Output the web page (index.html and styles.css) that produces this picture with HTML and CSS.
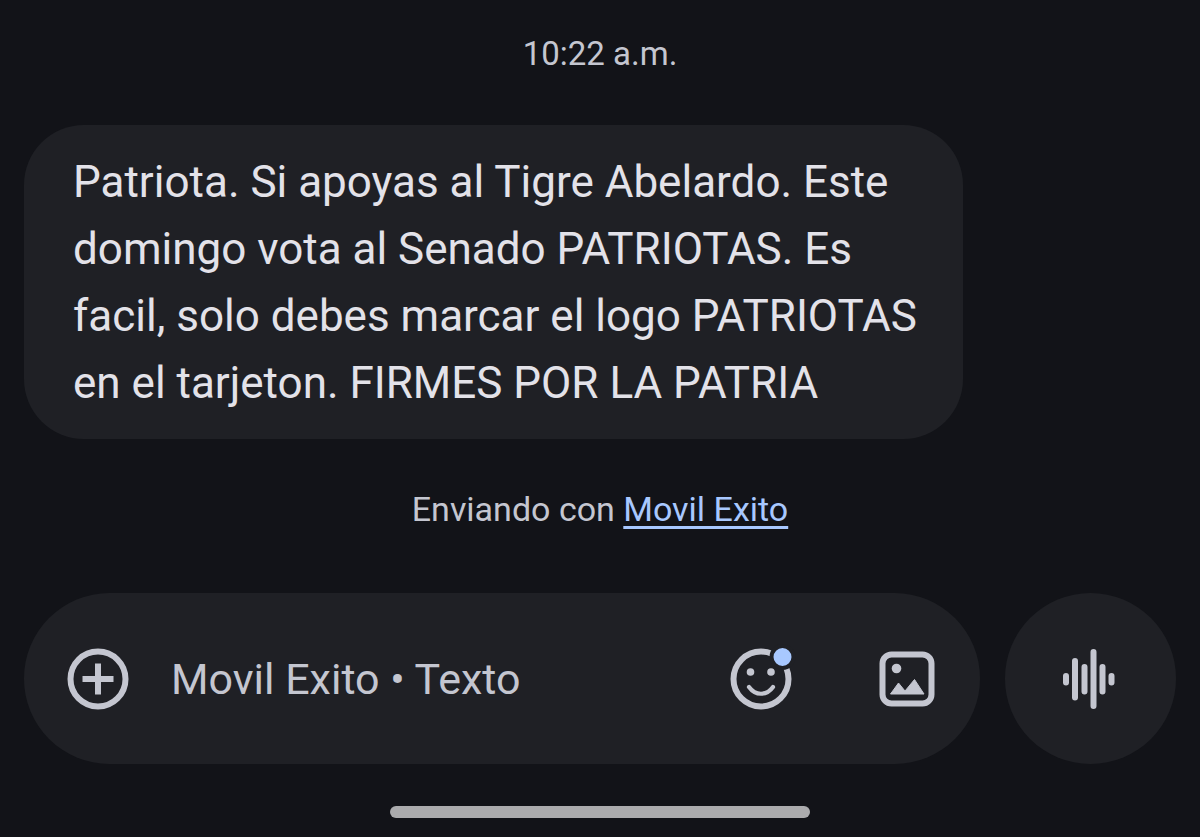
FILE: index.html
```
<!DOCTYPE html>
<html lang="es">
<head>
    <meta charset="UTF-8">
    <meta name="viewport" content="width=device-width, initial-scale=1.0">
    <title>Mensajes</title>
    <link rel="stylesheet" href="styles.css">
</head>
<body>
<main class="chat">
    <time class="time" datetime="10:22">10:22 a.m.</time>

    <p class="bubble">Patriota. Si apoyas al Tigre Abelardo. Este domingo vota al Senado PATRIOTAS. Es facil, solo debes marcar el logo PATRIOTAS en el tarjeton. FIRMES POR LA PATRIA</p>

    <p class="sim">Enviando con <a href="#">Movil Exito</a></p>

    <form class="composer">
        <div class="field">
            <button type="button" class="icon-btn" aria-label="Adjuntar">
                <svg width="62" height="62" viewBox="0 0 62 62">
                    <circle cx="31" cy="31" r="27.5" fill="none" stroke="currentColor" stroke-width="6"/>
                    <path d="M31 15.5v31M15.5 31h31" stroke="currentColor" stroke-width="6"/>
                </svg>
            </button>
            <input type="text" name="message" placeholder="Movil Exito • Texto" aria-label="Mensaje">
            <button type="button" class="icon-btn emoji" aria-label="Emojis">
                <svg width="62" height="62" viewBox="0 0 62 62">
                    <circle cx="31" cy="31" r="27.5" fill="none" stroke="currentColor" stroke-width="6"/>
                    <circle cx="20.5" cy="24" r="3.8"/>
                    <circle cx="41" cy="24" r="3.8"/>
                    <path d="M19 39c6.5 9 17.500 9 24 0" fill="none" stroke="currentColor" stroke-width="4.200" stroke-linecap="round"/>
                    <circle class="dot" cx="52.5" cy="9" r="11"/>
                </svg>
            </button>
            <button type="button" class="icon-btn" aria-label="Galería">
                <svg width="56" height="56" viewBox="0 0 56 56">
                    <rect x="3.5" y="3.5" width="49" height="49" rx="9" fill="none" stroke="currentColor" stroke-width="6"/>
                    <circle cx="17.5" cy="17.5" r="4.8"/>
                    <path d="M11.500 43l8-11 6.500 8 9.500-11.500 9.500 14.500z" stroke="currentColor" stroke-linejoin="round"/>
                </svg>
            </button>
        </div>
        <button type="button" class="voice" aria-label="Nota de voz">
            <svg width="62" height="62" viewBox="0 0 62 62">
                <g fill="none" stroke="currentColor" stroke-width="6" stroke-linecap="round">
                    <path d="M6 28v6.5M15 13v36.5M24.5 19v24.5M33.5 4v54M42.5 19v24.5M51.5 28v6.5"/>
                </g>
            </svg>
        </button>
    </form>

    <div class="nav-handle"></div>
</main>
</body>
</html>
```

FILE: styles.css
```
* {
    margin: 0;
    padding: 0;
    box-sizing: border-box;
}

body {
    background: #121318;
    color: #c4c6d0;
    font-family: Roboto, sans-serif;
}

.chat {
    display: flex;
    flex-direction: column;
    align-items: center;
    min-height: 100vh;
    padding: 32px 24px 19px;
}

.time,
.sim {
    font-size: 34px;
    line-height: 44px;
}

.time {
    font-size: 33px;
}

.bubble {
    align-self: flex-start;
    width: 82%;
    max-width: 939px;
    margin: 49px 0 48px;
    padding: 24px 46px 22px 49px;
    border-radius: 60px;
    background: #1f2025;
    color: #e3e2e9;
    font-size: 44px;
    line-height: 67px;
}

.sim a {
    color: #a8c8ff;
    text-decoration-thickness: 3px;
    text-underline-offset: 5px;
}

.composer {
    display: flex;
    gap: 25px;
    width: 100%;
    margin-top: 62px;
}

.field {
    display: flex;
    flex: 1;
    align-items: center;
    min-width: 0;
    height: 171px;
    padding: 0 45px 0 43px;
    border-radius: 86px;
    background: #1f2025;
}

.field input {
    flex: 1;
    min-width: 0;
    margin: 0 40px 0 42px;
    border: none;
    outline: none;
    background: none;
    color: #e3e2e9;
    font: 43px/60px Roboto, sans-serif;
}

.field input::placeholder {
    color: #c4c6d0;
    opacity: 1;
}

button {
    border: none;
    background: none;
    color: #c4c6d0;
    cursor: pointer;
}

button svg {
    display: block;
    overflow: visible;
    fill: currentColor;
}

.emoji {
    margin-right: 87px;
}

.dot {
    fill: #a8c8ff;
    stroke: #1f2025;
    stroke-width: 4px;
}

.voice {
    display: flex;
    align-items: center;
    justify-content: center;
    width: 171px;
    height: 171px;
    border-radius: 50%;
    background: #1f2025;
}

.nav-handle {
    width: 420px;
    max-width: 40%;
    height: 12px;
    margin-top: auto;
    border-radius: 6px;
    background: #ababad;
}
```
